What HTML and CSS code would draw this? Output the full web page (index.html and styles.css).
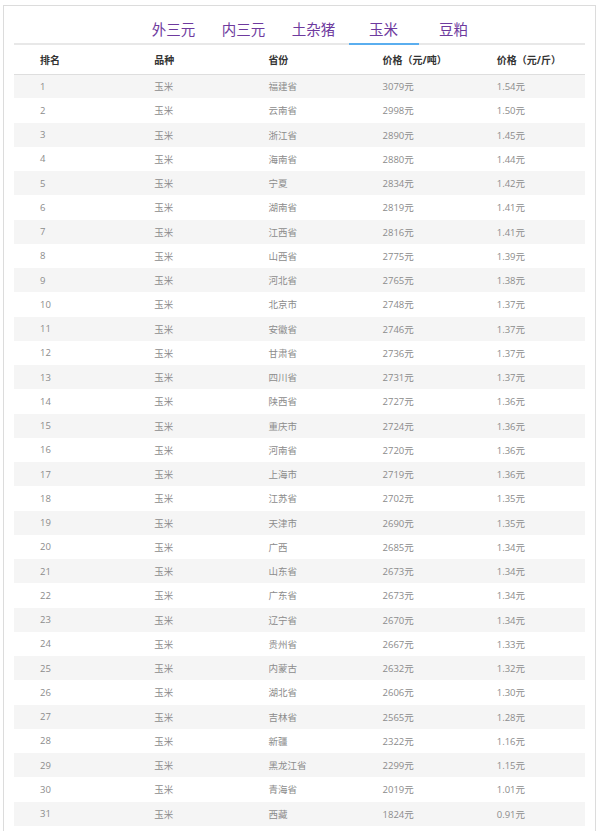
FILE: index.html
```html
<!DOCTYPE html>
<html lang="zh-CN">
<head>
<meta charset="utf-8">
<title>玉米价格排名</title>
<link rel="stylesheet" href="styles.css">
</head>
<body>
<div class="panel">
  <ul class="tabs">
    <li class="tab">外三元</li>
    <li class="tab">内三元</li>
    <li class="tab">土杂猪</li>
    <li class="tab active">玉米</li>
    <li class="tab">豆粕</li>
  </ul>
  <table class="rank">
    <thead>
      <tr><th>排名</th><th>品种</th><th>省份</th><th>价格（元/吨）</th><th>价格（元/斤）</th></tr>
    </thead>
    <tbody>
      <tr><td>1</td><td>玉米</td><td>福建省</td><td>3079元</td><td>1.54元</td></tr>
      <tr><td>2</td><td>玉米</td><td>云南省</td><td>2998元</td><td>1.50元</td></tr>
      <tr><td>3</td><td>玉米</td><td>浙江省</td><td>2890元</td><td>1.45元</td></tr>
      <tr><td>4</td><td>玉米</td><td>海南省</td><td>2880元</td><td>1.44元</td></tr>
      <tr><td>5</td><td>玉米</td><td>宁夏</td><td>2834元</td><td>1.42元</td></tr>
      <tr><td>6</td><td>玉米</td><td>湖南省</td><td>2819元</td><td>1.41元</td></tr>
      <tr><td>7</td><td>玉米</td><td>江西省</td><td>2816元</td><td>1.41元</td></tr>
      <tr><td>8</td><td>玉米</td><td>山西省</td><td>2775元</td><td>1.39元</td></tr>
      <tr><td>9</td><td>玉米</td><td>河北省</td><td>2765元</td><td>1.38元</td></tr>
      <tr><td>10</td><td>玉米</td><td>北京市</td><td>2748元</td><td>1.37元</td></tr>
      <tr><td>11</td><td>玉米</td><td>安徽省</td><td>2746元</td><td>1.37元</td></tr>
      <tr><td>12</td><td>玉米</td><td>甘肃省</td><td>2736元</td><td>1.37元</td></tr>
      <tr><td>13</td><td>玉米</td><td>四川省</td><td>2731元</td><td>1.37元</td></tr>
      <tr><td>14</td><td>玉米</td><td>陕西省</td><td>2727元</td><td>1.36元</td></tr>
      <tr><td>15</td><td>玉米</td><td>重庆市</td><td>2724元</td><td>1.36元</td></tr>
      <tr><td>16</td><td>玉米</td><td>河南省</td><td>2720元</td><td>1.36元</td></tr>
      <tr><td>17</td><td>玉米</td><td>上海市</td><td>2719元</td><td>1.36元</td></tr>
      <tr><td>18</td><td>玉米</td><td>江苏省</td><td>2702元</td><td>1.35元</td></tr>
      <tr><td>19</td><td>玉米</td><td>天津市</td><td>2690元</td><td>1.35元</td></tr>
      <tr><td>20</td><td>玉米</td><td>广西</td><td>2685元</td><td>1.34元</td></tr>
      <tr><td>21</td><td>玉米</td><td>山东省</td><td>2673元</td><td>1.34元</td></tr>
      <tr><td>22</td><td>玉米</td><td>广东省</td><td>2673元</td><td>1.34元</td></tr>
      <tr><td>23</td><td>玉米</td><td>辽宁省</td><td>2670元</td><td>1.34元</td></tr>
      <tr><td>24</td><td>玉米</td><td>贵州省</td><td>2667元</td><td>1.33元</td></tr>
      <tr><td>25</td><td>玉米</td><td>内蒙古</td><td>2632元</td><td>1.32元</td></tr>
      <tr><td>26</td><td>玉米</td><td>湖北省</td><td>2606元</td><td>1.30元</td></tr>
      <tr><td>27</td><td>玉米</td><td>吉林省</td><td>2565元</td><td>1.28元</td></tr>
      <tr><td>28</td><td>玉米</td><td>新疆</td><td>2322元</td><td>1.16元</td></tr>
      <tr><td>29</td><td>玉米</td><td>黑龙江省</td><td>2299元</td><td>1.15元</td></tr>
      <tr><td>30</td><td>玉米</td><td>青海省</td><td>2019元</td><td>1.01元</td></tr>
      <tr><td>31</td><td>玉米</td><td>西藏</td><td>1824元</td><td>0.91元</td></tr>
    </tbody>
  </table>
</div>
</body>
</html>
```

FILE: styles.css
```css
* { box-sizing: border-box; }
html, body { margin: 0; padding: 0; background: #fff; }
body {
  font-family: "Open Sans", "Noto Sans CJK SC", sans-serif;
  overflow: hidden;
}
.panel {
  margin: 5px 4px 0 3px;
  border: 1px solid #dcdcdc;
  border-bottom: none;
  padding: 0 10px;
  height: 840px;
}
.tabs {
  list-style: none;
  margin: 0;
  padding: 9px 0 0 28px;
  display: flex;
  justify-content: center;
  border-bottom: 2px solid #e8e8e8;
}
.tab {
  width: 70px;
  text-align: center;
  font-family: "Noto Sans CJK SC", sans-serif;
  font-size: 14.5px;
  line-height: 28px;
  color: #6e3a9e;
  margin-bottom: -2px;
  border-bottom: 2px solid transparent;
}
.tab.active { border-bottom-color: #5aaeef; }
.rank {
  width: 100%;
  table-layout: fixed;
  border-collapse: collapse;
}
.rank th {
  height: 29px;
  text-align: left;
  padding: 0 0 0 26px;
  font-size: 10px;
  font-weight: bold;
  color: #333;
  border-bottom: 1px solid #dedede;
}
.rank td {
  height: 24.25px;
  padding: 0 0 0 26px;
  font-size: 9.5px;
  color: #8c8c8c;
}
.rank tbody tr:nth-child(odd) td { background: #f5f5f5; }
```
